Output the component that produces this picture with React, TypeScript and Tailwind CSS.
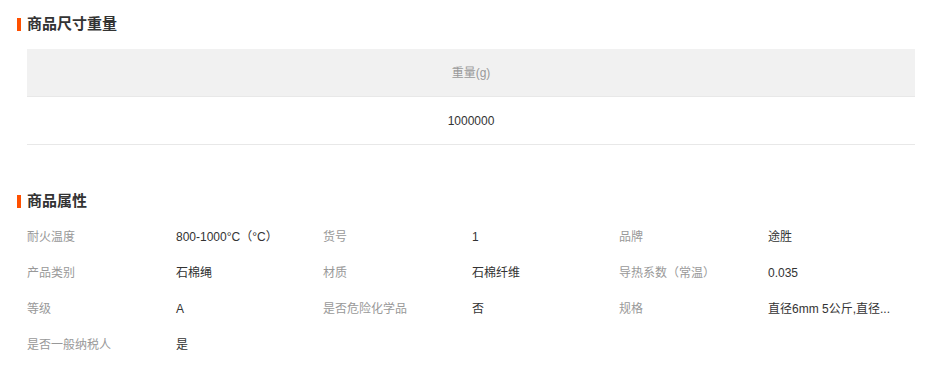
import React from 'react';

const attrs: { label: string; value: string }[] = [
  { label: '耐火温度', value: '800-1000°C（°C）' },
  { label: '货号', value: '1' },
  { label: '品牌', value: '途胜' },
  { label: '产品类别', value: '石棉绳' },
  { label: '材质', value: '石棉纤维' },
  { label: '导热系数（常温）', value: '0.035' },
  { label: '等级', value: 'A' },
  { label: '是否危险化学品', value: '否' },
  { label: '规格', value: '直径6mm 5公斤,直径...' },
  { label: '是否一般纳税人', value: '是' },
];

const SectionTitle: React.FC<{ text: string }> = ({ text }) => (
  <div className="flex items-center h-[18px] pl-[17px]">
    <div className="w-[4px] h-[13px] bg-[#ff5000]"></div>
    <h3 className="ml-[6px] text-[15px] leading-[18px] font-bold text-[#333]">{text}</h3>
  </div>
);

const App: React.FC = () => {
  return (
    <div
      className="w-[950px] h-[367px] bg-white overflow-hidden pt-[15px]"
      style={{ fontFamily: '"Liberation Sans", "Noto Sans CJK SC", sans-serif' }}
    >
      <SectionTitle text="商品尺寸重量" />

      <div className="mt-[16px] ml-[27px] w-[888px] text-[12px]">
        <div className="h-[48px] bg-[#f1f1f1] border-b border-[#e8e8e8] flex items-center justify-center text-[#999]">
          重量(g)
        </div>
        <div className="h-[48px] border-b border-[#e8e8e8] flex items-center justify-center text-[#333]">
          1000000
        </div>
      </div>

      <div className="mt-[47px]">
        <SectionTitle text="商品属性" />
      </div>

      <div className="mt-[9px] ml-[27px] w-[888px] grid grid-cols-3 text-[12px]">
        {attrs.map((a, i) => (
          <div key={i} className="flex items-center h-[36px]">
            <span className="w-[149px] shrink-0 text-[#999] whitespace-nowrap">{a.label}</span>
            <span className="text-[#333] whitespace-nowrap">{a.value}</span>
          </div>
        ))}
      </div>
    </div>
  );
};

export default App;
